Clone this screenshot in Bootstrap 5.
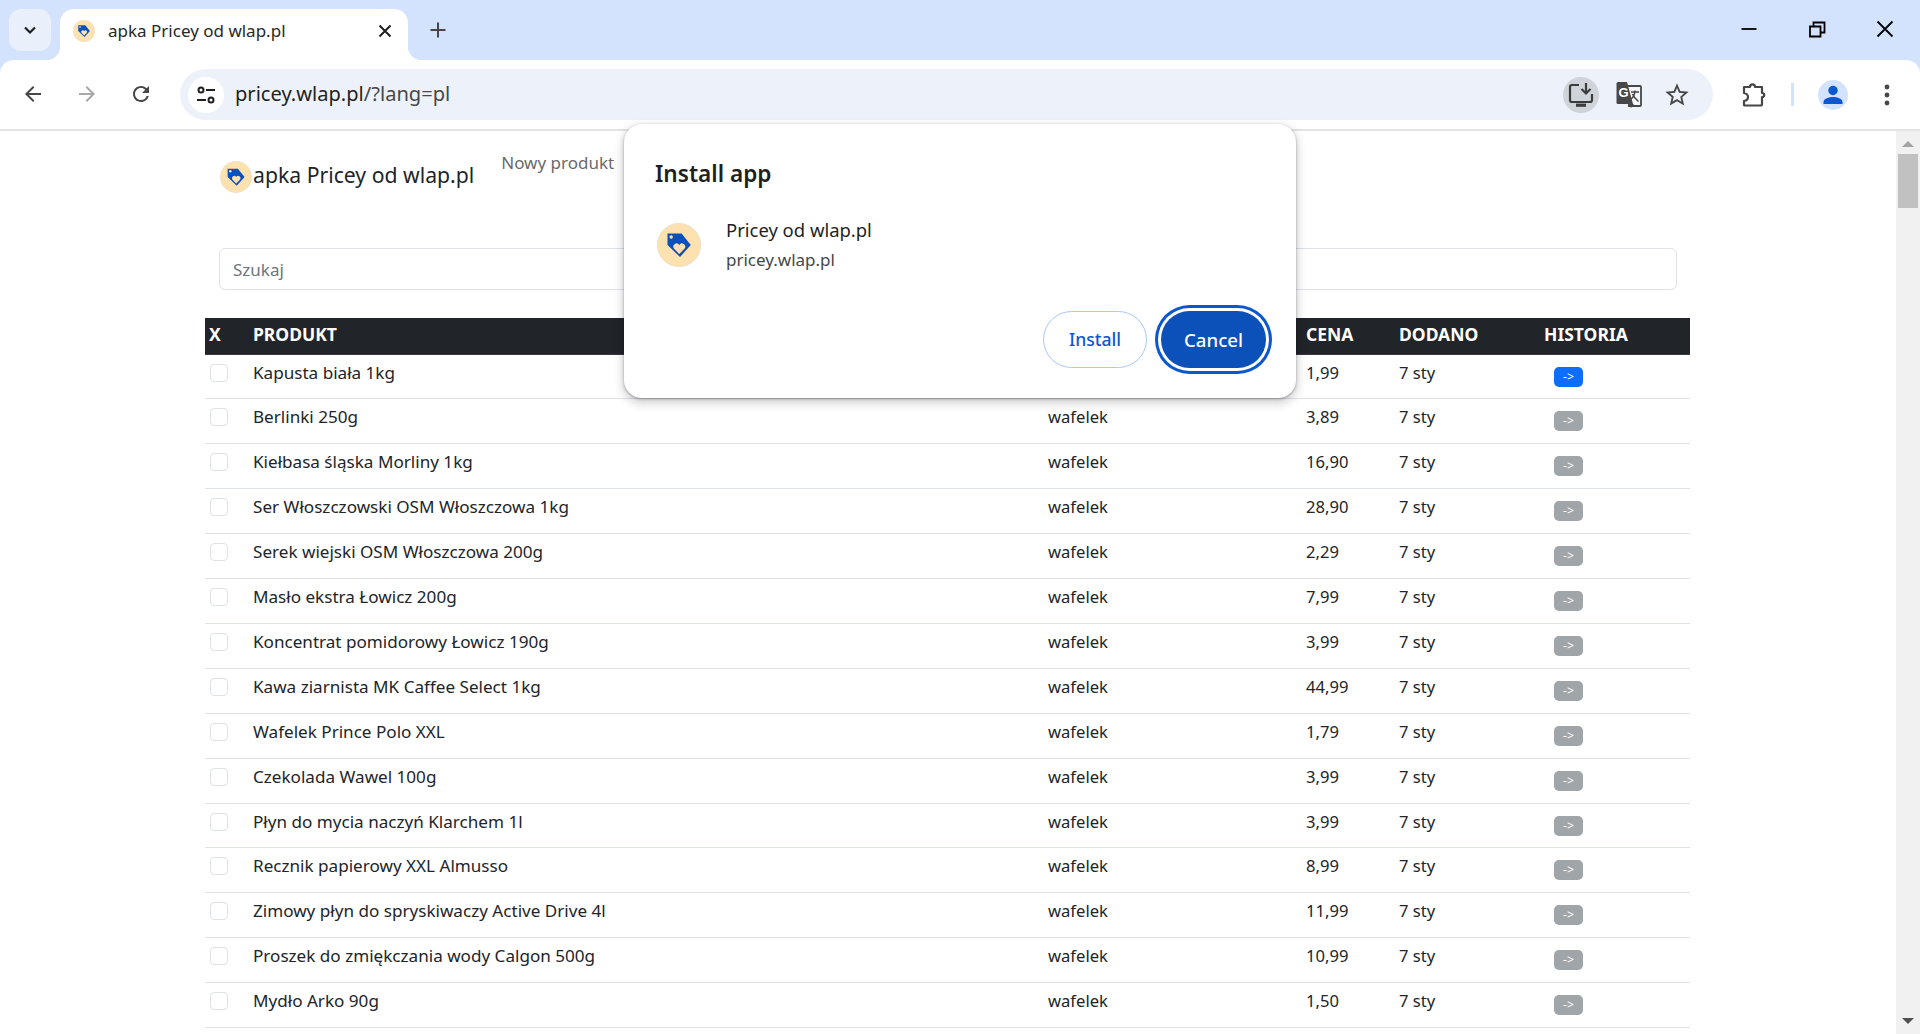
<!doctype html>
<html lang="pl">
<head>
<meta charset="utf-8">
<title>apka Pricey od wlap.pl</title>
<link href="https://cdn.jsdelivr.net/npm/bootstrap@5.3.0/dist/css/bootstrap.min.css" rel="stylesheet">
<style>
:root{--ui:"Noto Sans","Liberation Sans",sans-serif;}
html,body{height:100%;}
body{font-family:var(--ui);color:#212529;overflow:hidden;background:#fff;font-size:17px;}
svg{display:block;flex:none;}
.tabstrip{height:60px;background:#d3e3fd;padding-left:9px;}
.tabmenu{width:42px;height:42px;margin-top:9px;border-radius:12px;background:#e9effb;}
.chrometab{position:relative;width:348px;height:51px;margin:9px 0 0 9px;background:#fff;border-radius:14px 14px 0 0;padding:0 16px 7px 13px;font-size:17px;color:#282828;}
.chrometab::before,.chrometab::after{content:"";position:absolute;bottom:0;width:14px;height:14px;}
.chrometab::before{left:-14px;background:radial-gradient(circle at 0 0,transparent 14px,#fff 14.5px);}
.chrometab::after{right:-14px;background:radial-gradient(circle at 100% 0,transparent 14px,#fff 14.5px);}
.tabtitle{margin-left:13px;}
.tabnew{margin:21px 0 0 21px;}
.winbtns{gap:44px;padding:17px 23px 0 0;}
.toolbarrow{height:71px;border-bottom:2px solid #e3e3e3;background:#fff;border-radius:14px 14px 0 0;padding:0 21px;}
.toolbar-wrap{background:#d3e3fd;}
.navicons{gap:30px;width:159px;padding-bottom:1px;}
.omnibox{width:1533px;height:51px;border-radius:26px;background:#edf2fa;padding:0 22px 0 8px;color:#474747;font-size:20.1px;}
.sitebtn{width:36px;height:36px;border-radius:50%;background:#fff;margin-right:11px;}
.urlhost{color:#1f1f1f;}
.omniright{gap:15px;}
.starbtn{margin-left:4px;}
.installchip{width:36px;height:36px;border-radius:50%;background:#cfd4da;}
.toolright{margin-left:28px;}
.tooldivider{width:3px;height:23px;background:#d3e3fd;margin:0 24px;}
.avatar{width:30px;height:30px;border-radius:50%;background:#d3e3fd;margin-right:36px;}
.pagearea{min-height:0;}
.scrolltrack{width:24px;background:#f1f1f1;padding:10px 2px;}
.scrollthumb{height:54px;background:#c1c1c1;margin-top:7px;}
.scrollup{width:0;height:0;border:6px solid transparent;border-top:0;border-bottom:6px solid #a3a3a3;margin:0 auto;}
.scrolldown{width:0;height:0;border:6px solid transparent;border-bottom:0;border-top:6px solid #505050;margin:auto auto 0;}
.pagewrap{width:1485px;margin-left:205px;}
.topnav{height:117px;padding:30px 0 0 15px;}
.brandlink{display:flex;align-items:center;font-size:21.2px;color:#212529;padding:0;margin:0;height:32px;}
.brandlink svg{margin-right:1px;}
.brandtext{margin-bottom:4px;}
.newlink{font-size:17px;color:#6a6a6a;padding:0;margin:-10px 0 0 27px;line-height:24px;text-decoration:none;}
.searchbox.form-control{margin-left:14px;width:1458px;height:42px;font-size:17px;border-color:#dfe2e6;padding:0 13px;font-family:var(--ui);}
.searchbox::placeholder{color:#6c757d;}
.pricetable{margin:28px 0 0;table-layout:fixed;width:1485px;font-size:16.6px;}
.pricetable th{height:36px;padding:4px;line-height:25px;font-size:17.5px;font-weight:700;text-transform:uppercase;vertical-align:top;}
.pricetable td{height:44.92px;padding:4px;vertical-align:top;line-height:27px;color:#212529;}
.pricetable td:nth-child(2){font-size:17.1px;}
.rowcheck.form-check-input{display:block;width:18px;height:18px;margin:5px 0 0 1px;border-color:#dee2e6;}
.histbtn.btn{display:block;width:29px;height:20px;margin:8px 0 0 10px;padding:0;border-radius:5px;font-size:12.5px;line-height:19px;color:#fff;border:0;}
.histbtn.btn-secondary{background:#a0a5a9;opacity:1;}
.installdlg{position:absolute;left:624px;top:124px;width:672px;height:274px;background:#fff;border-radius:18px;box-shadow:0 1px 3px rgba(0,0,0,.3),0 4px 10px 2px rgba(0,0,0,.16);padding:33px 24px 0 31px;}
.dlgtitle{font-size:22.6px;font-weight:600;line-height:34px;color:#1f1f1f;margin:0;}
.dlgapp{margin-top:32px;gap:25px;margin-left:2px;}
.appname{font-size:18.45px;line-height:26px;color:#1f1f1f;margin-top:-6px;}
.appurl{font-size:17px;line-height:24px;margin-top:4.6px;color:#474747;}
.dlgbtns{gap:9px;margin-top:39.4px;padding-right:6px;}
.pillbtn.btn{height:57px;border-radius:29px;font-size:18.6px;font-weight:500;font-family:var(--ui);padding:0;}
.pillinstall.btn{width:104px;color:#0b57d0;background:#fff;border:1.5px solid #a8c7fa;font-size:17.6px;}
.pillcancel.btn{width:105px;color:#fff;background:#0c50b9;border:0;margin-left:5px;box-shadow:0 0 0 3px #fff,0 0 0 6px #0b57d0;}
</style>
</head>
<body class="d-flex flex-column">
<svg width="0" height="0" class="position-absolute"><defs>
<symbol id="pricelogo" viewBox="0 0 44 44">
<circle cx="22" cy="22" r="21.6" fill="#fde2b0" stroke="#e9dcc4" stroke-width=".8"/>
<path d="M10.5 10.5H24.6L33.8 22 23 34 10.5 22z" fill="#0c50b9"/>
<circle cx="14.2" cy="14" r="1.7" fill="#fde2b0"/>
<path d="M22.3 31l-5.4-5.6a3.2 3.2 0 0 1 5.4-3.5 3.2 3.2 0 0 1 5.4 3.5z" fill="#fde2b0"/>
</symbol>
</defs></svg>

<header>
<div class="tabstrip d-flex">
  <div class="tabmenu d-flex align-items-center justify-content-center">
    <svg width="16" height="16" viewBox="0 0 16 16"><path d="M3 5.5l5 5 5-5" fill="none" stroke="#1f1f1f" stroke-width="2.2"/></svg>
  </div>
  <div class="chrometab d-flex align-items-center">
    <svg width="22" height="22"><use href="#pricelogo"/></svg>
    <span class="tabtitle flex-grow-1">apka Pricey od wlap.pl</span>
    <svg width="14" height="14" viewBox="0 0 14 14"><path d="M1.5 1.5l11 11m0-11l-11 11" stroke="#1f1f1f" stroke-width="2"/></svg>
  </div>
  <svg class="tabnew" width="18" height="18" viewBox="0 0 18 18"><path d="M9 1.5v15M1.5 9h15" stroke="#474747" stroke-width="2"/></svg>
  <div class="winbtns d-flex ms-auto">
    <svg width="24" height="24" viewBox="0 0 24 24"><path d="M4.500 12h15" stroke="#000" stroke-width="1.800"/></svg>
    <svg width="24" height="24" viewBox="0 0 24 24"><path d="M5 9.500h10.500v10H5zM8.500 9.500V5.500h11v10h-4" fill="none" stroke="#000" stroke-width="1.800"/></svg>
    <svg width="24" height="24" viewBox="0 0 24 24"><path d="M4.500 4.500l15 15m0-15l-15 15" stroke="#000" stroke-width="1.800"/></svg>
  </div>
</div>
<div class="toolbar-wrap">
<div class="toolbarrow d-flex align-items-center">
  <div class="navicons d-flex align-items-center">
    <svg width="24" height="24" viewBox="0 0 24 24"><path fill="#474747" d="M20 11H7.830l5.590-5.590L12 4l-8 8 8 8 1.410-1.410L7.830 13H20v-2z"/></svg>
    <svg width="24" height="24" viewBox="0 0 24 24"><path fill="#a9a9a9" d="M4 11h12.170l-5.590-5.590L12 4l8 8-8 8-1.410-1.410L16.170 13H4v-2z"/></svg>
    <svg width="24" height="24" viewBox="0 0 24 24"><path fill="#474747" d="M17.650 6.350A7.960 7.960 0 0 0 12 4c-4.420 0-7.990 3.580-7.990 8s3.570 8 7.990 8c3.730 0 6.840-2.550 7.730-6h-2.080A5.990 5.990 0 0 1 12 18c-3.310 0-6-2.690-6-6s2.690-6 6-6c1.660 0 3.140.69 4.220 1.780L13 11h7V4l-2.350 2.350z"/></svg>
  </div>
  <div class="omnibox d-flex align-items-center">
    <div class="sitebtn d-flex align-items-center justify-content-center">
      <svg width="22" height="22" viewBox="0 0 22 22" fill="none" stroke="#1f1f1f" stroke-width="2"><circle cx="6" cy="6" r="2.500"/><path d="M11 6h9M2 16h9"/><circle cx="16" cy="16" r="2.500"/></svg>
    </div>
    <div class="flex-grow-1"><span class="urlhost">pricey.wlap.pl</span>/?lang=pl</div>
    <div class="omniright d-flex align-items-center">
      <div class="installchip d-flex align-items-center justify-content-center">
        <svg width="30" height="30" viewBox="0 0 30 30" fill="none" stroke="#3c3c3c" stroke-width="2.200"><path d="M13 5H6a2 2 0 0 0-2 2v13a2 2 0 0 0 2 2h18a2 2 0 0 0 2-2v-6"/><path d="M20 3v10M15.500 9l4.500 4.500L24.500 9"/><path d="M10 25.200h10" stroke-width="3.200"/></svg>
      </div>
      <svg width="30" height="30" viewBox="0 0 30 30"><path d="M13 6h13a1 1 0 0 1 1 1v18a1 1 0 0 1-1 1H15z" fill="#f4f6fa" stroke="#474747" stroke-width="1.800"/><path d="M4 2h9l6 22H4a1.500 1.500 0 0 1-1.500-1.500V3.500A1.500 1.500 0 0 1 4 2z" fill="#474747"/><path d="M15 24l2 4 3-4z" fill="#474747"/><text x="4.600" y="17" font-size="13" font-weight="700" font-family="Liberation Sans,sans-serif" fill="#fff">G</text><path d="M17 12h8M21 10.500c0 4-2.500 7.500-4.500 9M18.500 14c1 2.500 3.500 5.500 6 7.500" fill="none" stroke="#474747" stroke-width="1.500"/></svg>
      <svg class="starbtn" width="28" height="28" viewBox="0 0 24 24"><path fill="#474747" d="M22 9.240l-7.190-.62L12 2 9.190 8.630 2 9.240l5.460 4.730L5.820 21 12 17.270 18.180 21l-1.630-7.030L22 9.240zM12 15.400l-3.760 2.270 1-4.280-3.320-2.880 4.380-.38L12 6.100l1.710 4.040 4.380.38-3.320 2.880 1 4.280L12 15.400z"/></svg>
    </div>
  </div>
  <div class="toolright d-flex align-items-center">
    <svg width="26" height="26" viewBox="0 0 26 26" fill="none" stroke="#474747" stroke-width="2.200" stroke-linejoin="round"><path d="M3 5h6c0-3.500 5-3.500 5 0h7v6c3 0 3 4 0 4v7a1.500 1.500 0 0 1-1.500 1.500H3.500L3 23v-4c3-.5 4-2 4-4s-1.500-3.500-4-4z"/></svg>
    <div class="tooldivider"></div>
    <div class="avatar d-flex align-items-center justify-content-center">
      <svg width="22" height="22" viewBox="0 0 22 22" fill="#0b57d0"><circle cx="11" cy="6.500" r="4.700"/><path d="M1.500 20v-2c0-3.300 5.500-5 9.500-5s9.500 1.700 9.500 5v2z"/></svg>
    </div>
    <svg width="6" height="22" viewBox="0 0 6 22" fill="#474747"><circle cx="3" cy="3" r="2.400"/><circle cx="3" cy="11" r="2.400"/><circle cx="3" cy="19" r="2.400"/></svg>
  </div>
</div>
</div>
</header>

<div class="pagearea d-flex flex-grow-1">
<main class="flex-grow-1 overflow-hidden">
<div class="pagewrap">
  <nav class="topnav d-flex align-items-start">
    <a class="navbar-brand brandlink" href="#"><svg width="32" height="32"><use href="#pricelogo"/></svg><span class="brandtext">apka Pricey od wlap.pl</span></a>
    <a class="newlink" href="#">Nowy produkt</a>
  </nav>
  <input class="form-control searchbox" type="text" placeholder="Szukaj">
  <table class="table table-sm pricetable">
    <colgroup><col style="width:44px"><col style="width:795px"><col style="width:258px"><col style="width:93px"><col style="width:145px"><col></colgroup>
    <thead class="table-dark"><tr><th>X</th><th>Produkt</th><th></th><th>Cena</th><th>Dodano</th><th>Historia</th></tr></thead>
    <tbody>
      <tr><td><input class="form-check-input rowcheck" type="checkbox"></td><td>Kapusta biała 1kg</td><td>wafelek</td><td>1,99</td><td>7 sty</td><td><a class="btn btn-primary histbtn" href="#">-&gt;</a></td></tr>
      <tr><td><input class="form-check-input rowcheck" type="checkbox"></td><td>Berlinki 250g</td><td>wafelek</td><td>3,89</td><td>7 sty</td><td><a class="btn btn-secondary histbtn" href="#">-&gt;</a></td></tr>
      <tr><td><input class="form-check-input rowcheck" type="checkbox"></td><td>Kiełbasa śląska Morliny 1kg</td><td>wafelek</td><td>16,90</td><td>7 sty</td><td><a class="btn btn-secondary histbtn" href="#">-&gt;</a></td></tr>
      <tr><td><input class="form-check-input rowcheck" type="checkbox"></td><td>Ser Włoszczowski OSM Włoszczowa 1kg</td><td>wafelek</td><td>28,90</td><td>7 sty</td><td><a class="btn btn-secondary histbtn" href="#">-&gt;</a></td></tr>
      <tr><td><input class="form-check-input rowcheck" type="checkbox"></td><td>Serek wiejski OSM Włoszczowa 200g</td><td>wafelek</td><td>2,29</td><td>7 sty</td><td><a class="btn btn-secondary histbtn" href="#">-&gt;</a></td></tr>
      <tr><td><input class="form-check-input rowcheck" type="checkbox"></td><td>Masło ekstra Łowicz 200g</td><td>wafelek</td><td>7,99</td><td>7 sty</td><td><a class="btn btn-secondary histbtn" href="#">-&gt;</a></td></tr>
      <tr><td><input class="form-check-input rowcheck" type="checkbox"></td><td>Koncentrat pomidorowy Łowicz 190g</td><td>wafelek</td><td>3,99</td><td>7 sty</td><td><a class="btn btn-secondary histbtn" href="#">-&gt;</a></td></tr>
      <tr><td><input class="form-check-input rowcheck" type="checkbox"></td><td>Kawa ziarnista MK Caffee Select 1kg</td><td>wafelek</td><td>44,99</td><td>7 sty</td><td><a class="btn btn-secondary histbtn" href="#">-&gt;</a></td></tr>
      <tr><td><input class="form-check-input rowcheck" type="checkbox"></td><td>Wafelek Prince Polo XXL</td><td>wafelek</td><td>1,79</td><td>7 sty</td><td><a class="btn btn-secondary histbtn" href="#">-&gt;</a></td></tr>
      <tr><td><input class="form-check-input rowcheck" type="checkbox"></td><td>Czekolada Wawel 100g</td><td>wafelek</td><td>3,99</td><td>7 sty</td><td><a class="btn btn-secondary histbtn" href="#">-&gt;</a></td></tr>
      <tr><td><input class="form-check-input rowcheck" type="checkbox"></td><td>Płyn do mycia naczyń Klarchem 1l</td><td>wafelek</td><td>3,99</td><td>7 sty</td><td><a class="btn btn-secondary histbtn" href="#">-&gt;</a></td></tr>
      <tr><td><input class="form-check-input rowcheck" type="checkbox"></td><td>Recznik papierowy XXL Almusso</td><td>wafelek</td><td>8,99</td><td>7 sty</td><td><a class="btn btn-secondary histbtn" href="#">-&gt;</a></td></tr>
      <tr><td><input class="form-check-input rowcheck" type="checkbox"></td><td>Zimowy płyn do spryskiwaczy Active Drive 4l</td><td>wafelek</td><td>11,99</td><td>7 sty</td><td><a class="btn btn-secondary histbtn" href="#">-&gt;</a></td></tr>
      <tr><td><input class="form-check-input rowcheck" type="checkbox"></td><td>Proszek do zmiękczania wody Calgon 500g</td><td>wafelek</td><td>10,99</td><td>7 sty</td><td><a class="btn btn-secondary histbtn" href="#">-&gt;</a></td></tr>
      <tr><td><input class="form-check-input rowcheck" type="checkbox"></td><td>Mydło Arko 90g</td><td>wafelek</td><td>1,50</td><td>7 sty</td><td><a class="btn btn-secondary histbtn" href="#">-&gt;</a></td></tr>
    </tbody>
  </table>
</div>
</main>
<div class="scrolltrack d-flex flex-column">
  <div class="scrollup"></div>
  <div class="scrollthumb"></div>
  <div class="scrolldown"></div>
</div>
</div>

<section class="installdlg" role="dialog">
  <h2 class="dlgtitle">Install app</h2>
  <div class="dlgapp d-flex align-items-start">
    <svg width="44" height="44"><use href="#pricelogo"/></svg>
    <div>
      <div class="appname">Pricey od wlap.pl</div>
      <div class="appurl">pricey.wlap.pl</div>
    </div>
  </div>
  <div class="dlgbtns d-flex justify-content-end">
    <button class="btn pillbtn pillinstall" type="button">Install</button>
    <button class="btn pillbtn pillcancel" type="button">Cancel</button>
  </div>
</section>
<script src="https://cdn.jsdelivr.net/npm/bootstrap@5.3.0/dist/js/bootstrap.bundle.min.js"></script>
</body>
</html>
